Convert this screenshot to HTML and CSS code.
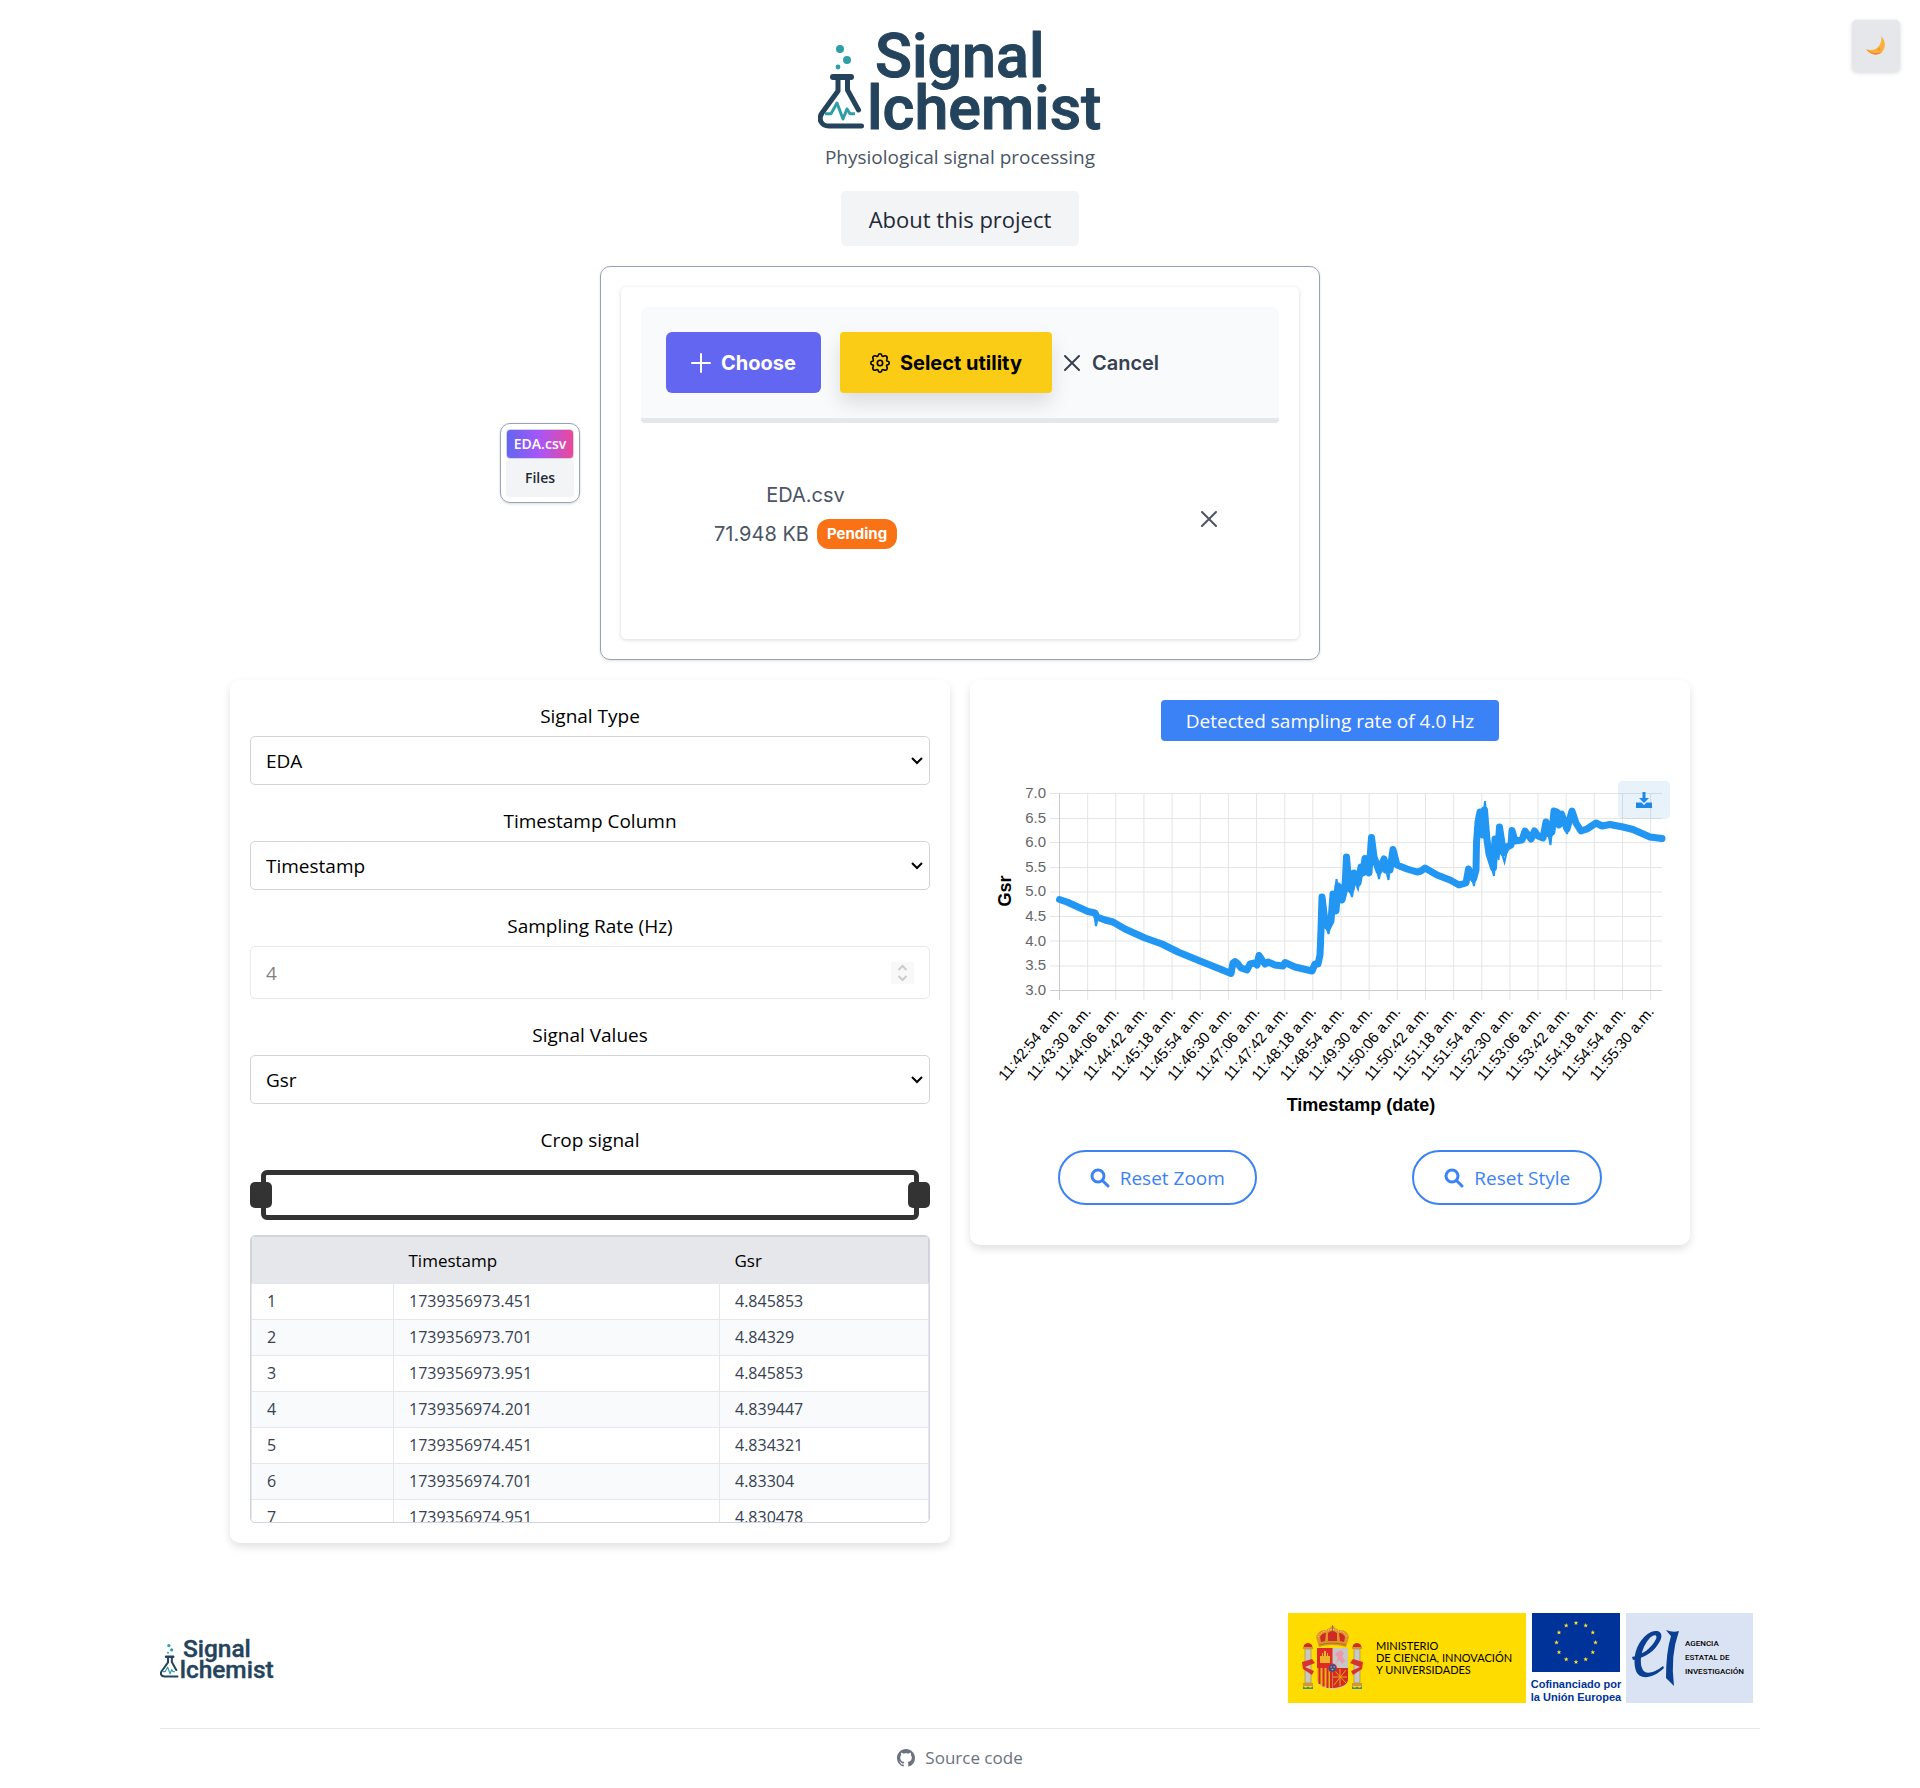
FILE: index.html
```html
<!DOCTYPE html>
<html lang="en">
<head>
<meta charset="utf-8">
<title>Signal Alchemist</title>
<meta name="viewport" content="width=device-width, initial-scale=1">
<link rel="stylesheet" href="styles.css">
</head>
<body>
<svg class="sprite" aria-hidden="true">
  <symbol id="logo" viewBox="0 0 284 104">
    <g class="logo-bubbles"><circle cx="22" cy="21" r="4"/><circle cx="29" cy="32" r="4"/><circle cx="20" cy="39" r="2.4"/></g>
    <g class="logo-flask">
      <path d="M15 49H33" stroke-width="6"/>
      <path d="M20 50V63L4 85C0 91 3 98 11 98H43.500M29.500 50V62L40.500 82"/>
    </g>
    <path class="logo-pulse" d="M7 85.700H13L19 75L25 91L29 81L32 85.700H37"/>
    <text class="logo-text" x="57" y="49">Signal</text>
    <text class="logo-text" x="49" y="101">lchemist</text>
  </symbol>
  <symbol id="search" viewBox="0 0 20 20"><circle cx="8" cy="8" r="6"/><path d="M12.500 12.500L18 18"/></symbol>
  <symbol id="cross" viewBox="0 0 16 16"><path d="M1 1L15 15M15 1L1 15"/></symbol>
  <symbol id="star" viewBox="-5 -5 10 10"><path d="M0-5L1.200-1.500H4.800L1.900.700L3 4.200L0 2L-3 4.200L-1.900.700L-4.800-1.500H-1.200Z"/></symbol>
</svg>

<button class="theme-toggle" aria-label="Toggle dark mode">
  <svg width="20" height="20" viewBox="0 0 20 20"><path d="M15 0C20 5 20 12 16 16C11 20 4 19 0 13C5 15 10 14 13 10C15 7 16 4 15 0Z" fill="#fbb03b"/><path d="M0 13C5 20 12 20 16 16C10 18 5 17 0 13Z" fill="#ef8a3a"/><circle cx="13" cy="13" r="1.500" fill="#e99a35"/></svg>
</button>

<header class="header">
  <svg class="logo" role="img" aria-label="Signal Alchemist"><use href="#logo"/></svg>
  <p class="tagline">Physiological signal processing</p>
  <button class="about">About this project</button>
</header>

<main class="main">
  <section class="upload">
    <div class="files">
      <span class="files-name">EDA.csv</span>
      <button class="files-button">Files</button>
    </div>
    <div class="uploader">
      <div class="uploader-inner">
        <div class="toolbar">
          <button class="btn btn-choose"><svg class="line-icon" width="20" height="20" viewBox="0 0 20 20"><path d="M10 1V19M1 10H19"/></svg>Choose</button>
          <button class="btn btn-utility"><svg class="line-icon gear" width="20" height="20" viewBox="0 0 20 20"><path d="M8.300 2Q8.600.800 10 .800T11.700 2L12.100 3.200Q12.700 3.700 13.500 3.300L14.600 2.800Q15.800 2.500 16.600 3.400T17.200 5.400L16.700 6.500Q16.300 7.300 16.800 7.900L18 8.300Q19.200 8.600 19.200 10T18 11.700L16.800 12.100Q16.300 12.700 16.700 13.500L17.200 14.600Q17.500 15.800 16.600 16.600T14.600 17.200L13.500 16.700Q12.700 16.300 12.100 16.800L11.700 18Q11.400 19.200 10 19.200T8.300 18L7.900 16.800Q7.300 16.300 6.500 16.700L5.400 17.200Q4.200 17.500 3.400 16.600T2.800 14.600L3.300 13.500Q3.700 12.700 3.200 12.100L2 11.700Q.800 11.400 .800 10T2 8.300L3.200 7.900Q3.700 7.300 3.300 6.500L2.800 5.400Q2.500 4.200 3.400 3.400T5.400 2.800L6.500 3.300Q7.300 3.700 7.900 3.200Z"/><circle cx="10" cy="10" r="2.700"/></svg>Select utility</button>
          <button class="btn btn-cancel"><svg class="line-icon" width="16" height="16"><use href="#cross"/></svg>Cancel</button>
        </div>
        <div class="file-row">
          <div class="file-info">
            <span>EDA.csv</span>
            <div class="file-meta"><span>71.948 KB</span><span class="badge">Pending</span></div>
          </div>
          <button class="remove" aria-label="Remove file"><svg class="line-icon" width="16" height="16"><use href="#cross"/></svg></button>
        </div>
      </div>
    </div>
  </section>

  <section class="panels">
    <form class="card">
      <div class="field"><label for="type">Signal Type</label><select id="type"><option>EDA</option></select></div>
      <div class="field"><label for="time">Timestamp Column</label><select id="time"><option>Timestamp</option></select></div>
      <div class="field">
        <label for="rate">Sampling Rate (Hz)</label>
        <div class="rate">
          <input id="rate" type="number" value="4" disabled>
          <svg class="stepper" width="23" height="22" viewBox="0 0 23 22" aria-hidden="true"><path d="M7.500 8L11.500 4L15.500 8M7.500 14L11.500 18L15.500 14"/></svg>
        </div>
      </div>
      <div class="field"><label for="values">Signal Values</label><select id="values"><option>Gsr</option></select></div>
      <div class="field crop">
        <label for="crop-start">Crop signal</label>
        <div class="range">
          <input id="crop-start" type="range" min="0" max="100" value="0">
          <input type="range" min="0" max="100" value="100" aria-label="Crop end">
        </div>
      </div>
      <div class="table-wrap">
        <table>
          <thead><tr><th class="col-index"></th><th class="col-time">Timestamp</th><th>Gsr</th></tr></thead>
          <tbody>
            <tr><td>1</td><td>1739356973.451</td><td>4.845853</td></tr>
            <tr><td>2</td><td>1739356973.701</td><td>4.84329</td></tr>
            <tr><td>3</td><td>1739356973.951</td><td>4.845853</td></tr>
            <tr><td>4</td><td>1739356974.201</td><td>4.839447</td></tr>
            <tr><td>5</td><td>1739356974.451</td><td>4.834321</td></tr>
            <tr><td>6</td><td>1739356974.701</td><td>4.83304</td></tr>
            <tr><td>7</td><td>1739356974.951</td><td>4.830478</td></tr>
          </tbody>
        </table>
      </div>
    </form>

    <div class="card chart-card">
      <p class="notice">Detected sampling rate of 4.0 Hz</p>
      <div class="chart">
        <svg class="plot" viewBox="0 0 680 340" role="img" aria-label="Gsr over time">
          <path class="grid" id="grid-h" d="M60 13.500H672M60 38.500H672M60 62.500H672M60 87.500H672M60 112H672M60 136.500H672M60 161H672M60 186H672"/>
          <path class="grid" id="grid-v" d=""/>
          <path class="axis" d="M60 210.500H672M69.500 13V220"/>
          <g class="y-labels"></g>
          <g class="x-labels"></g>
          <path class="signal" d="M69.500 119.500L77 122L98 131.500L105 133L107 137L115 140L123 142L135 149L155 158L172 164L188 172L210 181L230 189L241 193.500L243 183L245 181.500L248 184L251 188L257 190L260 184L265 183L267 185L269 175.500L272 180L275 184L278 182L285 185L293 186L295 182.500L305 187L322 191L325 184L328 184L330 175L331 150L332 117L335 142L338 147L341 141L343 114L346 131L348 106L350 108L352 120L355 108L356.500 77L359 106L361 110L364 93L368 103L371 87L373 93L375 78.500L379 93L381.500 57.500L384 77L389 91L394 79L396 90L400 90L403 69.500L407 85L417 89L427 92L431 91L435 88L447 95L460 100L469 105L476 103L478.500 89L483.500 99L486 90L486.500 63L488 42L490 32L493 55L494.500 30L497 60L499 74L503.500 88L505 59L508 70L509.500 47L513.500 73L517 67L521 65L522 50.500L525 61L532 60L535 51L541 59L544.500 51L548 56L553 58L556 42L559.500 54L562 52L564 31L567 32L569 45L571.500 34L577 49L582 31L586 43L591 51L597 49L606 43L612 46L620 44.500L633 47L643 49.500L660 57L672 58.500"/>
          <path class="spikes" d="M104 133L106 146L108 136M336 145L338.500 154L341 142M345 112L346.500 99L348 110M359 108L362 117L364 104M366 104L368 109L370 98M387 90L389 99L391 88M396 90L398.500 100L400 88M482 98L484 106L486 92M493 40L495 21L497 45M501 85L504 96L505 80M507 70L508.500 80L510 65M512 74L514.500 82L517 70M558 52L560.500 65L562 50M575 47L577 54L579 45"/>
        </svg>
        <button class="download" aria-label="Download chart"><svg width="16" height="16" viewBox="0 0 16 16"><path d="M6.500 0H9.500V6H13L8 11L3 6H6.500ZM0 10.500H5.500L8 13L10.500 10.500H16V16H0Z"/></svg></button>
      </div>
      <div class="chart-actions">
        <button class="reset"><svg class="search" width="20" height="20"><use href="#search"/></svg>Reset Zoom</button>
        <button class="reset"><svg class="search" width="20" height="20"><use href="#search"/></svg>Reset Style</button>
      </div>
    </div>
  </section>
</main>

<footer class="footer">
  <div class="footer-top">
    <svg class="footer-logo" role="img" aria-label="Signal Alchemist"><use href="#logo"/></svg>
    <div class="sponsors">
      <div class="ministry">
        <svg width="62" height="66" viewBox="0 0 62 66" aria-hidden="true">
          <g fill="#c9c9c4" stroke="#8b7a4a" stroke-width=".5"><rect x="3" y="24" width="6" height="34"/><rect x="52" y="24" width="6" height="34"/></g>
          <path d="M1 21H11V24H1ZM50 21H60V24H50ZM1 58H11V61H1ZM50 58H60V61H50Z" fill="#d9962c"/>
          <path d="M2 20Q6 16 10 20V22H2ZM51 20Q55 16 59 20V22H51Z" fill="#cf2c22"/>
          <path d="M1 61Q3.500 64 6 61.500Q8.500 64 11 61V64H1ZM50 61Q52.500 64 55 61.500Q57.500 64 60 61V64H50Z" fill="#3c8f8b"/>
          <path d="M0 37L10 34L13 38L3 42L12 46L10 50L1 44ZM61 37L51 34L48 38L58 42L49 46L51 50L60 44Z" fill="#d8322a"/>
          <path d="M15 23H46V54Q46 63 30.500 64Q15 63 15 54Z" fill="#c6c6c6"/>
          <path d="M15 23H30.500V43H15Z" fill="#de2b25"/>
          <path d="M15 43H30.500V63Q15 62 15 54Z" fill="#f0b020"/>
          <path d="M17.500 43V59M21.500 43V61.500M25.500 43V63M29 43V63" stroke="#d52b1e" stroke-width="2"/>
          <path d="M30.500 43H46V54Q46 62 30.500 63Z" fill="#d52b1e"/>
          <path d="M32 45L44 58M44 45L32 60M38 44V61M31 52H45" stroke="#e7a526" fill="none"/>
          <path d="M18 38V31H20V28H21V31H22V26H24V31H25V28H26V31H28V38Z" fill="#efb22b"/>
          <path d="M35 27L39 25L42 28L40 31L43 36L40 39L37 35L34 39L36 32L33 30Z" fill="#e99aae"/>
          <circle cx="30.500" cy="43" r="4.500" fill="#de2b25"/><circle cx="30.500" cy="43" r="3.500" fill="#2455a4"/>
          <path d="M28.500 42H30M31.500 42H33M29.700 44.500H31.300" stroke="#f0c030"/>
          <path d="M17 22L14 12Q17 4 24 5Q30 0 37 5Q45 4 47 12L44 22Q30 18 17 22Z" fill="#e0932a"/>
          <path d="M19 17L18 12Q20 8 24 8L23 16ZM26 16V8Q30 4 35 8V16ZM42 17L43 12Q41 8 37 8L38 16Z" fill="#cd2a23"/>
          <path d="M30.500 0V6M28.500 2H32.500M17 20Q30 16 44 20" stroke="#9a7a28" fill="none"/>
          <path d="M16 12Q20 6 24 6Q30 3 37 6Q42 6 45 12" stroke="#f5e6b0" stroke-dasharray="1 1.500" fill="none"/>
        </svg>
        <p>MINISTERIO<br>DE CIENCIA, INNOVACIÓN<br>Y UNIVERSIDADES</p>
      </div>
      <div class="europe">
        <svg width="88" height="59" viewBox="0 0 88 59" aria-hidden="true">
          <rect width="88" height="59" fill="#039"/>
          <g fill="#ffe625"><use href="#star" x="41.500" y="7.500" width="5" height="5"/><use href="#star" x="51.200" y="10" width="5" height="5"/><use href="#star" x="58.300" y="17" width="5" height="5"/><use href="#star" x="61" y="27" width="5" height="5"/><use href="#star" x="58.300" y="36.700" width="5" height="5"/><use href="#star" x="51.200" y="43.800" width="5" height="5"/><use href="#star" x="41.500" y="46.500" width="5" height="5"/><use href="#star" x="31.700" y="43.800" width="5" height="5"/><use href="#star" x="24.500" y="36.700" width="5" height="5"/><use href="#star" x="22" y="27" width="5" height="5"/><use href="#star" x="24.500" y="17" width="5" height="5"/><use href="#star" x="31.700" y="10" width="5" height="5"/></g>
        </svg>
        <p>Cofinanciado por<br>la Unión Europea</p>
      </div>
      <div class="agency">
        <svg width="48" height="56" viewBox="0 0 48 56" aria-hidden="true"><path d="M0 27C10 25 20 18 24 9C26 4 21 4 17 9C10 17 7 30 10 38C12 45 21 44 31 36L32 38C22 48 8 51 4 41C-1 25 7 8 19 2C27-1 32 3 28 11C23 21 13 28 1 30Z" fill="#0b3f93"/><path d="M34 0Q41 3 47 1Q38 26 42 56L34 48Q34 22 39 6Q37 4 34 0Z" fill="#0b3f93"/></svg>
        <p>AGENCIA<br>ESTATAL DE<br>INVESTIGACIÓN</p>
      </div>
    </div>
  </div>
  <div class="footer-bottom">
    <a href="#source"><svg width="18" height="18" viewBox="0 0 16 16" aria-hidden="true"><path d="M8 0C3.580 0 0 3.580 0 8c0 3.540 2.290 6.530 5.470 7.590.4.070.55-.17.55-.38 0-.19-.01-.82-.01-1.490-2.010.37-2.530-.49-2.690-.94-.09-.23-.48-.94-.82-1.130-.28-.15-.68-.52-.01-.53.63-.01 1.080.58 1.230.82.72 1.210 1.870.87 2.330.66.07-.52.28-.87.51-1.070-1.780-.2-3.640-.89-3.640-3.950 0-.87.31-1.590.82-2.150-.08-.2-.36-1.020.08-2.120 0 0 .67-.21 2.200.82.640-.18 1.320-.27 2-.27s1.360.09 2 .27c1.530-1.040 2.200-.82 2.200-.82.44 1.100.16 1.920.08 2.120.51.56.82 1.270.82 2.150 0 3.070-1.870 3.750-3.650 3.950.29.25.54.73.54 1.480 0 1.070-.01 1.930-.01 2.200 0 .21.15.46.55.38A8.010 8.010 0 0 0 16 8c0-4.420-3.580-8-8-8z"/></svg>Source code</a>
  </div>
</footer>
<script src="chart.js"></script>
</body>
</html>
```
FILE: chart.js
```js
const NS = "http://www.w3.org/2000/svg";

function label(group, text, attributes) {
  const node = document.createElementNS(NS, "text");
  node.textContent = text;
  for (const [name, value] of Object.entries(attributes)) node.setAttribute(name, value);
  group.append(node);
}

const yLabels = document.querySelector(".y-labels");
for (let i = 0; i <= 8; i++) {
  label(yLabels, (7 - i / 2).toFixed(1), { x: 56, y: Math.round(18 + i * 24.6) });
}
label(yLabels, "Gsr", { class: "axis-title", transform: "translate(21 111) rotate(-90)" });

const xLabels = document.querySelector(".x-labels");
let columns = "";
for (let i = 0; i < 22; i++) {
  const x = 69.5 + i * 28.15;
  const seconds = 42 * 60 + 54 + i * 36;
  const minute = String(Math.floor(seconds / 60)).padStart(2, "0");
  const second = String(seconds % 60).padStart(2, "0");
  label(xLabels, `11:${minute}:${second} a.m.`, { transform: `translate(${x + 4} 232) rotate(-50)` });
  if (i) columns += `M${x} 13V220`;
}
label(xLabels, "Timestamp (date)", { class: "axis-title", x: 371, y: 331 });
document.getElementById("grid-v").setAttribute("d", columns);
```
FILE: styles.css
```css
* { box-sizing: border-box; }

body {
  margin: 0;
  background: #fff;
  color: #000;
  font: 19px/30px "Open Sans", "Noto Sans", sans-serif;
}

p { margin: 0; }
svg { display: block; flex: none; }
button, input, select { font: inherit; color: inherit; margin: 0; }
button { border: 0; background: none; cursor: pointer; padding: 0; }

.sprite { position: absolute; width: 0; height: 0; }

.logo-bubbles { fill: #2f9ea6; }
.logo-flask { fill: none; stroke: #24435c; stroke-width: 5; stroke-linecap: round; stroke-linejoin: round; }
.logo-pulse { fill: none; stroke: #2f9ea6; stroke-width: 3; stroke-linejoin: round; }
.logo-text { font: 500 61px Roboto, sans-serif; fill: #24435c; stroke: #24435c; stroke-width: 1; stroke-linejoin: round; }

.theme-toggle {
  position: absolute;
  top: 20px;
  right: 20px;
  display: grid;
  place-items: center;
  width: 48px;
  height: 52px;
  border-radius: 5px;
  background: #e5e7eb;
  box-shadow: 0 1px 4px rgba(0, 0, 0, .15);
}

.header { display: flex; flex-direction: column; align-items: center; padding-top: 28px; }
.logo { width: 284px; height: 104px; overflow: visible; }
.tagline { margin: 10px 0 19px; color: #4b5563; }
.about { padding: 13px 28px 11px; border-radius: 5px; background: #f3f4f6; color: #1f2937; font-size: 22px; line-height: 31px; }

.main { max-width: 1460px; margin: 20px auto 0; }

.upload { display: grid; grid-template-columns: 1fr minmax(0, 720px) 1fr; align-items: center; column-gap: 20px; }
.files {
  justify-self: end;
  display: flex;
  flex-direction: column;
  width: 80px;
  padding: 5px;
  border: 1px solid #94a3b8;
  border-radius: 10px;
  box-shadow: 0 1px 3px rgba(0, 0, 0, .15);
  font-size: 14px;
  font-weight: 600;
  text-align: center;
}
.files-name { border: 1px solid #d1d5db; border-radius: 4px; background: linear-gradient(90deg, #6366f1, #a855f7, #ec4899); color: #fff; line-height: 28px; }
.files-button { border-radius: 4px; background: #f3f4f6; color: #1f2937; line-height: 38px; }

.uploader {
  padding: 20px;
  border: 1px solid #94a3b8;
  border-radius: 10px;
  box-shadow: 0 1px 3px rgba(0, 0, 0, .12);
  font-family: Inter, sans-serif;
  font-size: 20px;
}
.uploader-inner { min-height: 352px; padding: 20px; border-radius: 5px; box-shadow: 0 1px 4px rgba(0, 0, 0, .15); }
.toolbar { display: flex; align-items: center; padding: 25px; border-bottom: 5px solid #e5e7eb; border-radius: 8px 8px 4px 4px; background: #f9fafb; }
.btn { display: flex; align-items: center; gap: 10px; height: 61px; font-weight: 700; border-radius: 6px; }
.line-icon { fill: none; stroke: currentColor; stroke-width: 2; stroke-linecap: round; stroke-linejoin: round; }
.gear { stroke-width: 1.6; }
.btn-choose { margin-right: 19px; padding: 0 25px; background: #6366f1; color: #fff; }
.btn-utility { margin-right: 12px; padding: 0 30px; border-radius: 4px; background: #facc15; box-shadow: 0 10px 20px rgba(0, 0, 0, .12); }
.btn-cancel { gap: 12px; color: #374151; font-weight: 600; }
.file-row { display: flex; align-items: center; justify-content: space-between; padding: 57px 62px 0 73px; color: #4b5563; }
.file-info { display: flex; flex-direction: column; align-items: center; gap: 9px; }
.file-meta { display: flex; gap: 8px; }
.badge { padding: 0 10px; border-radius: 12px; background: #f97316; color: #fff; font-size: 15px; font-weight: 700; }
.remove { padding-top: 8px; }

.panels { display: grid; grid-template-columns: 1fr 1fr; align-items: start; gap: 20px; margin-top: 20px; }
.card { padding: 20px; border-radius: 10px; box-shadow: 0 4px 8px rgba(0, 0, 0, .12); }
.field { display: flex; flex-direction: column; gap: 4px; margin-bottom: 20px; line-height: 32px; text-align: center; }
.field select, .rate input { width: 100%; border: 1px solid #d1d5db; border-radius: 5px; background: #fff; color: #000; }
.field select {
  height: 49px;
  padding: 0 15px;
  appearance: none;
  background: #fff url("data:image/svg+xml,%3Csvg xmlns='http://www.w3.org/2000/svg' width='12' height='8'%3E%3Cpath d='M1 1L6 6L11 1' fill='none' stroke='black' stroke-width='2'/%3E%3C/svg%3E") no-repeat right 6px center;
}
.rate { position: relative; }
.rate input { display: block; height: 53px; padding: 0 15px; appearance: textfield; }
.rate input:disabled { opacity: .5; }
.stepper { position: absolute; top: 16px; right: 16px; background: #f8f8f8; fill: none; stroke: #ccc; stroke-width: 2; }

.crop { gap: 14px; margin-bottom: 15px; }
.range { position: relative; height: 50px; margin: 0 11px; border: 5px solid #333; border-radius: 6px; }
.range input {
  position: absolute;
  inset: 7px -16px auto;
  width: calc(100% + 32px);
  height: 26px;
  appearance: none;
  background: none;
  pointer-events: none;
}
.range input::-webkit-slider-thumb { appearance: none; width: 22px; height: 26px; border-radius: 5px; background: #333; pointer-events: auto; }

.table-wrap { height: 288px; overflow: auto; scrollbar-width: none; border: 1px solid #d1d5db; border-radius: 5px; }
table { width: 100%; border-collapse: collapse; table-layout: fixed; border: 1px solid #d1d5db; font-size: 16px; line-height: 25px; text-align: left; }
th { height: 47px; padding: 0 15px; background: #e5e7eb; font-weight: 400; font-size: 17px; }
.col-index { width: 142px; }
.col-time { width: 326px; }
td { height: 36px; padding: 5px 15px; border: 1px solid #e5e7eb; color: #374151; }
tbody tr:nth-child(even) { background: #f9fafb; }

.chart-card { display: flex; flex-direction: column; align-items: center; padding-bottom: 40px; }
.notice { padding: 6px 25px 5px; border-radius: 4px; background: #3b82f6; color: #fff; }
.chart { position: relative; width: 100%; margin-top: 39px; }
.plot { width: 100%; height: auto; font: 15px "Liberation Sans", Arial, sans-serif; }
.grid { fill: none; stroke: #e5e5e5; stroke-width: 1; }
.axis { fill: none; stroke: #ccc; stroke-width: 1; }
.y-labels { fill: #666; text-anchor: end; }
.x-labels { fill: #000; text-anchor: end; }
.axis-title { fill: #000; font-size: 18px; font-weight: 700; text-anchor: middle; }
.signal { fill: none; stroke: #2196f3; stroke-width: 7; stroke-linecap: round; stroke-linejoin: round; }
.spikes { fill: none; stroke: #2196f3; stroke-width: 2; }
.download { position: absolute; top: 1px; right: 0; display: grid; place-items: center; width: 52px; height: 38px; border-radius: 5px; background: rgba(33, 130, 220, .1); }
.download svg { fill: #1e88e5; }
.chart-actions { display: flex; justify-content: space-around; gap: 20px; width: 100%; margin-top: 30px; }
.reset { display: flex; align-items: center; gap: 10px; height: 55px; padding: 0 30px; border: 2px solid #3b82f6; border-radius: 28px; color: #3b82f6; }
.search { fill: none; stroke: currentColor; stroke-width: 3; stroke-linecap: round; }

.footer { max-width: 1600px; margin: 70px auto 0; padding-bottom: 14px; }
.footer-top { display: flex; align-items: center; justify-content: space-between; padding: 0 7px 25px 0; }
.footer-logo { width: 114px; height: 42px; overflow: visible; }
.sponsors { display: flex; gap: 6px; height: 90px; }
.ministry { display: flex; align-items: center; gap: 12px; width: 238px; padding-left: 14px; background: #ffdc00; font: 11px/12px Lato, sans-serif; }
.europe { width: 88px; color: #039; font: 700 11px/13px "Liberation Sans", sans-serif; text-align: center; white-space: nowrap; }
.europe p { display: grid; justify-content: center; padding-top: 6px; }
.agency { display: flex; align-items: center; gap: 5px; width: 127px; padding-left: 6px; background: #dae3f3; font: 500 8px/14px Roboto, sans-serif; white-space: nowrap; }
.footer-bottom { display: flex; justify-content: center; padding-top: 14px; border-top: 1px solid #e5e7eb; font-size: 17px; }
.footer-bottom a { display: flex; align-items: center; gap: 10px; color: #6b7280; text-decoration: none; }
.footer-bottom svg { fill: #6b7280; }
```
